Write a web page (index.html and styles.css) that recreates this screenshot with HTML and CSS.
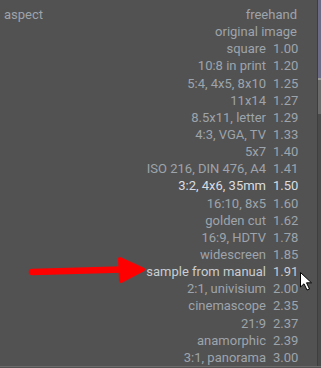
FILE: index.html
```html
<!DOCTYPE html>
<html>
<head>
    <title>aspect</title>
    <link rel="stylesheet" href="styles.css">
</head>
<body>
    <div class="window">
        <div class="panel">
            <div class="prop-label">aspect</div>
            <div class="ratio-list">
                <div class="row wide">freehand</div>
                <div class="row wide">original image</div>
                <div class="row"><span class="name">square</span><span class="val">1.00</span></div>
                <div class="row"><span class="name">10:8 in print</span><span class="val">1.20</span></div>
                <div class="row"><span class="name">5:4, 4x5, 8x10</span><span class="val">1.25</span></div>
                <div class="row"><span class="name">11x14</span><span class="val">1.27</span></div>
                <div class="row"><span class="name">8.5x11, letter</span><span class="val">1.29</span></div>
                <div class="row"><span class="name">4:3, VGA, TV</span><span class="val">1.33</span></div>
                <div class="row"><span class="name">5x7</span><span class="val">1.40</span></div>
                <div class="row"><span class="name">ISO 216, DIN 476, A4</span><span class="val">1.41</span></div>
                <div class="row selected"><span class="name">3:2, 4x6, 35mm</span><span class="val">1.50</span></div>
                <div class="row"><span class="name">16:10, 8x5</span><span class="val">1.60</span></div>
                <div class="row"><span class="name">golden cut</span><span class="val">1.62</span></div>
                <div class="row"><span class="name">16:9, HDTV</span><span class="val">1.78</span></div>
                <div class="row"><span class="name">widescreen</span><span class="val">1.85</span></div>
                <div class="row hover"><span class="name">sample from manual</span><span class="val">1.91</span></div>
                <div class="row"><span class="name">2:1, univisium</span><span class="val">2.00</span></div>
                <div class="row"><span class="name">cinemascope</span><span class="val">2.35</span></div>
                <div class="row"><span class="name">21:9</span><span class="val">2.37</span></div>
                <div class="row"><span class="name">anamorphic</span><span class="val">2.39</span></div>
                <div class="row"><span class="name">3:1, panorama</span><span class="val">3.00</span></div>
            </div>
        </div>
        <div class="side-strip">
            <div class="strip-top"></div>
            <div class="strip-marks"></div>
        </div>
    </div>

    <!-- annotation arrow -->
    <svg class="red-arrow" width="160" height="40" viewBox="0 0 160 40">
        <line x1="32" y1="22" x2="122" y2="19.5" stroke="#ff0000" stroke-width="6.5" stroke-linecap="round"/>
        <polygon points="120,9 143,19.5 121,31" fill="#ff0000" stroke="#ff0000" stroke-width="4" stroke-linejoin="round"/>
    </svg>

    <!-- mouse pointer -->
    <svg class="pointer" width="18" height="22" viewBox="0 0 18 22">
        <path d="M1.5 1.5 L1.5 16 L5 12.8 L8 19 L10.5 18 L7.5 11.8 L12.5 11.8 Z" fill="#ffffff" stroke="#000000" stroke-width="1" stroke-linejoin="round"/>
    </svg>
</body>
</html>
```

FILE: styles.css
```css
body {
    margin: 0;
    padding: 0;
    background-color: #525252;
    font-family: Roboto, "Liberation Sans", sans-serif;
    font-size: 13px;
    color: #9ea4ab;
    width: 321px;
    height: 368px;
    overflow: hidden;
    position: relative;
}
.window {
    display: flex;
    height: 366px;
    border-bottom: 1px solid #6a6a6a;
}
.panel {
    display: flex;
    justify-content: space-between;
    flex-shrink: 0;
    width: 293px;
    padding: 6px 20px 0 4px;
    border-right: 1px solid #3e3e3e;
}
.prop-label {
    line-height: 17px;
}
.ratio-list {
    display: grid;
    grid-template-columns: auto 24px;
    column-gap: 7px;
    line-height: 17px;
}
.row {
    display: contents;
}
.row .name {
    text-align: right;
}
.row .val {
    text-align: left;
}
.row.wide {
    display: block;
    grid-column: 1 / 3;
    text-align: right;
}
.row.selected {
    color: #dadde0;
}
.row.hover {
    color: #c9cdd1;
}
.side-strip {
    flex: 1;
    background-color: #4a4a4a;
    display: flex;
    flex-direction: column;
}
.strip-top {
    height: 78px;
    background-color: #6b6b86;
}
.strip-marks {
    height: 34px;
    background-color: #6a6a6a;
    border-top: 2px solid #9a9a9a;
}
.red-arrow {
    position: absolute;
    left: 0;
    top: 250px;
}
.pointer {
    position: absolute;
    left: 299px;
    top: 271px;
}
```
